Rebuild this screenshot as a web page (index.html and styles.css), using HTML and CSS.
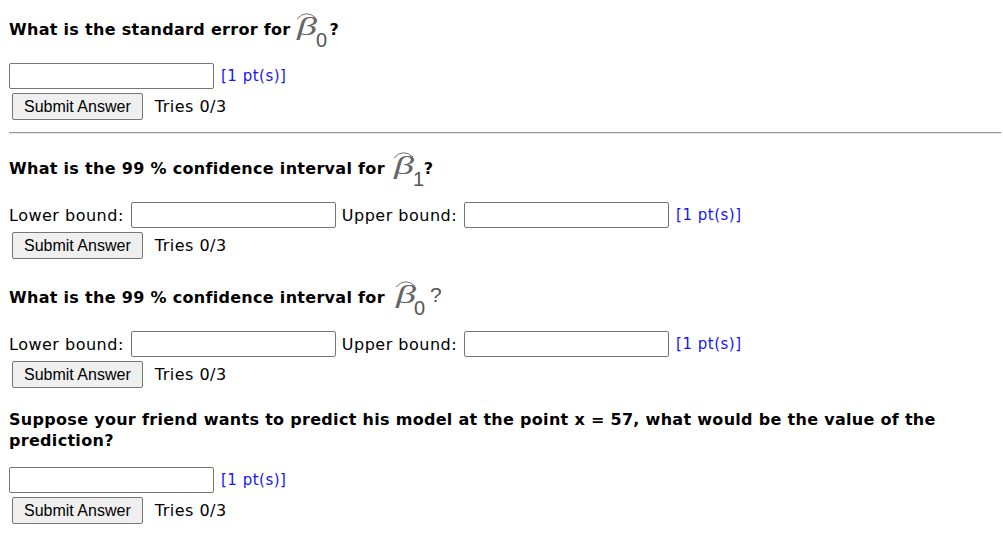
FILE: index.html
```html
<!DOCTYPE html>
<html>
<head>
<meta charset="utf-8">
<link rel="stylesheet" href="styles.css">
</head>
<body>
<div class="page">
  <section class="q q-first">
    <p class="prompt">What is the standard error for <svg class="math" width="33" height="36" viewBox="0 0 33 36"><path class="hat" d="M1 8 Q10 -2 20 7"/><text class="beta" x="1" y="24" textLength="20" lengthAdjust="spacingAndGlyphs">β</text><text class="sub" x="20" y="35.5">0</text></svg>?</p>
    <div class="row field-row"><input class="ans" type="text"><span class="pts">[1 pt(s)]</span></div>
    <div class="row btn-row"><button class="submit">Submit Answer</button><span class="tries">Tries 0/3</span></div>
  </section>
  <hr class="sep">
  <section class="q">
    <p class="prompt">What is the 99 % confidence interval for <svg class="math" width="33" height="36" viewBox="0 0 33 36"><path class="hat" d="M3 8 Q12 -2 22 7"/><text class="beta" x="3" y="24" textLength="20" lengthAdjust="spacingAndGlyphs">β</text><text class="sub" x="22" y="35.5">1</text></svg>?</p>
    <div class="row field-row"><span class="lbl">Lower bound:</span><input class="ans" type="text"><span class="lbl lbl-up">Upper bound:</span><input class="ans" type="text"><span class="pts">[1 pt(s)]</span></div>
    <div class="row btn-row"><button class="submit">Submit Answer</button><span class="tries">Tries 0/3</span></div>
  </section>
  <section class="q q-gap">
    <p class="prompt">What is the 99 % confidence interval for <svg class="math" width="48" height="36" viewBox="0 0 48 36"><path class="hat" d="M5 8 Q14 -2 24 7"/><text class="beta" x="5" y="24" textLength="20" lengthAdjust="spacingAndGlyphs">β</text><text class="sub" x="23" y="35.5">0</text><text class="qm" x="39" y="23">?</text></svg></p>
    <div class="row field-row"><span class="lbl">Lower bound:</span><input class="ans" type="text"><span class="lbl lbl-up">Upper bound:</span><input class="ans" type="text"><span class="pts">[1 pt(s)]</span></div>
    <div class="row btn-row"><button class="submit">Submit Answer</button><span class="tries">Tries 0/3</span></div>
  </section>
  <section class="q q-gap q-last">
    <p class="prompt prompt-wide">Suppose your friend wants to predict his model at the point x = 57, what would be the value of the prediction?</p>
    <div class="row field-row"><input class="ans" type="text"><span class="pts">[1 pt(s)]</span></div>
    <div class="row btn-row"><button class="submit">Submit Answer</button><span class="tries">Tries 0/3</span></div>
  </section>
</div>
</body>
</html>
```

FILE: styles.css
```css
html, body {
  margin: 0;
  padding: 0;
  background: #ffffff;
}
.page {
  padding: 11px 2px 0 9px;
  font-family: "DejaVu Sans", Verdana, sans-serif;
  font-size: 16px;
  letter-spacing: 0.5px;
  color: #000;
}
.q {
  margin: 0;
}
.q-gap {
  margin-top: 20px;
}
.q-last {
  margin-top: 21px;
}
.prompt {
  margin: 0 0 16px 0;
  font-weight: bold;
  line-height: 21px;
  letter-spacing: 0.3px;
}
.prompt-wide {
  max-width: 960px;
}
.math {
  vertical-align: -12px;
  overflow: visible;
}
.math text {
  letter-spacing: 0;
}
.math .hat {
  fill: none;
  stroke: #707070;
  stroke-width: 1;
}
.math .beta {
  font-family: "Liberation Serif", serif;
  font-weight: normal;
  font-style: italic;
  font-size: 25px;
  fill: #666;
}
.math .sub {
  font-family: "Liberation Sans", sans-serif;
  font-weight: normal;
  font-size: 20px;
  fill: #555;
}
.math .qm {
  font-family: "Liberation Sans", sans-serif;
  font-weight: normal;
  font-size: 21px;
  fill: #555;
}
.row {
  display: flex;
  align-items: center;
}
.field-row {
  height: 26px;
}
.btn-row {
  margin-top: 4px;
  height: 27px;
}
.ans {
  box-sizing: border-box;
  width: 205px;
  height: 26px;
  margin: 0;
  padding: 1px 2px;
  border: 1px solid #767676;
  border-radius: 2px;
  background: #fff;
  font: 16px "DejaVu Sans", sans-serif;
}
.pts {
  margin-left: 7px;
  font-size: 15px;
  letter-spacing: 0.5px;
  color: #1515f5;
}
.lbl {
  margin-right: 7px;
}
.lbl-up {
  margin-left: 6px;
}
.submit {
  box-sizing: border-box;
  height: 27px;
  margin: 0 0 0 3px;
  padding: 0 11px;
  font-family: "Liberation Sans", Arial, sans-serif;
  font-size: 16px;
  letter-spacing: 0;
  color: #000;
  background: #efefef;
  border: 1px solid #767676;
  border-radius: 2px;
}
.tries {
  margin-left: 12px;
}
.sep {
  height: 0;
  margin: 12px 0 16px 0;
  border: 0;
  border-top: 1px solid #9a9a9a;
  border-bottom: 1px solid #e6e6e6;
}
```
